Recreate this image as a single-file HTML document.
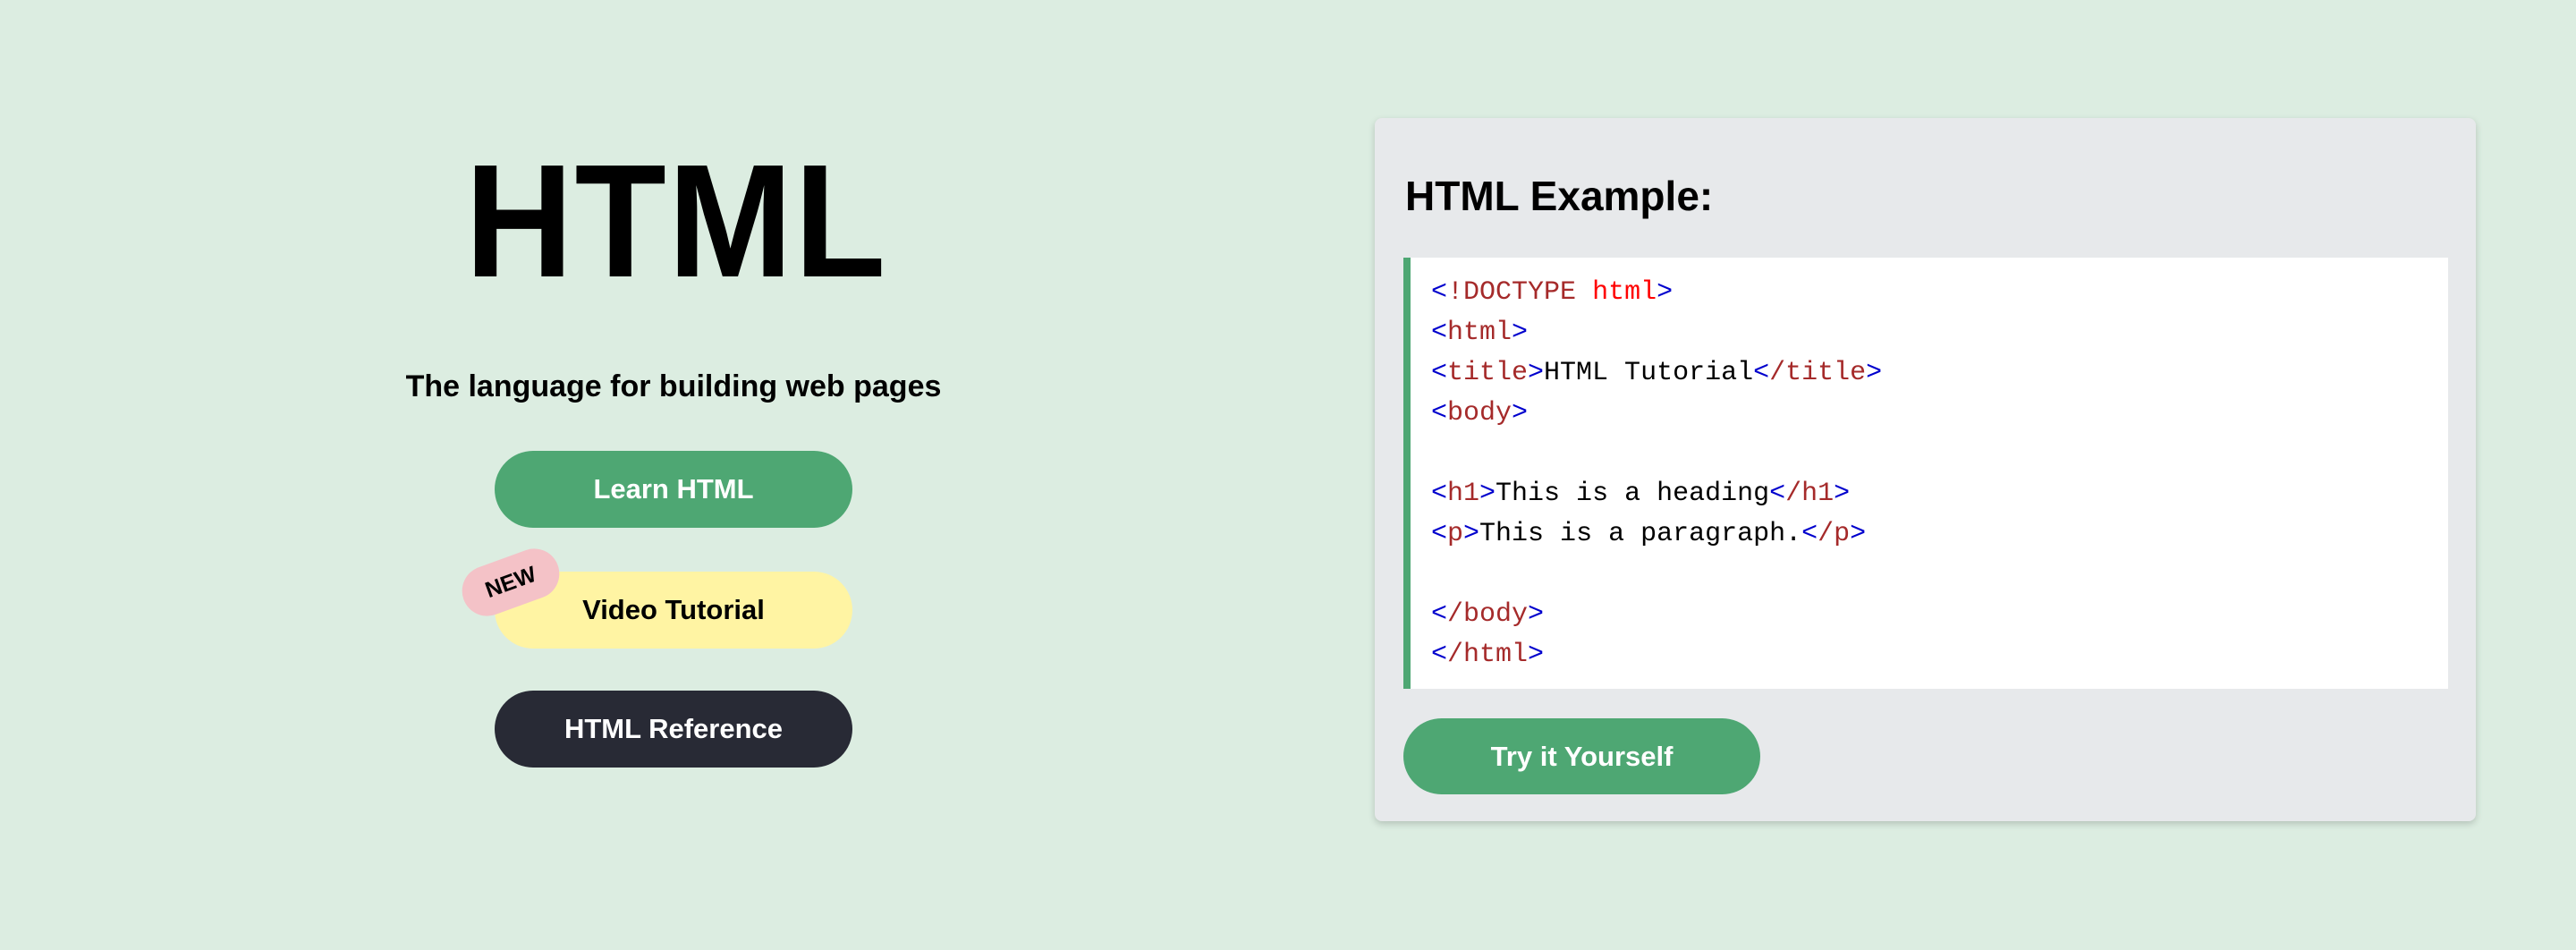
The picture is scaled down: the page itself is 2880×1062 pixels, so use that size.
<!DOCTYPE html>
<html><head><style>
html,body{margin:0;padding:0}
body{width:2880px;height:1062px;background:#dcede1;font-family:"Liberation Sans",sans-serif;position:relative;overflow:hidden}
.abs{position:absolute}
h1{position:absolute;left:456px;width:600px;top:138px;margin:0;font-size:180px;line-height:220px;text-align:center;font-weight:bold;letter-spacing:2px;color:#000;transform:scaleX(0.93);transform-origin:center}
.sub{left:353px;width:800px;top:410px;text-align:center;font-size:34px;font-weight:bold;color:#000;line-height:45px}
.btn{position:absolute;border-radius:43px;text-align:center;font-weight:bold;font-size:31px;line-height:86px;height:86px}
.new{left:515px;top:623px;width:112px;height:56px;border-radius:28px;background:#f4c2c7;transform:rotate(-20deg);font-weight:bold;font-size:25px;line-height:56px;text-align:center;color:#000}
.panel{left:1537px;top:132px;width:1231px;height:786px;background:#e7e9eb;border-radius:8px;box-shadow:0 3px 8px rgba(0,0,0,0.18)}
.ph{left:1571px;top:192px;font-size:46px;font-weight:bold;color:#000}
.code{left:1569px;top:288px;width:1160px;height:482px;background:#fff;border-left:8px solid #4ea773}
pre{margin:0;position:absolute;left:23px;top:17px;font-family:"Liberation Mono",monospace;font-size:30px;line-height:45px;color:#000}
.b{color:#0000cd}.t{color:#a52a2a}.r{color:#ff0000}
</style></head><body>
<h1>HTML</h1>
<div class="abs sub">The language for building web pages</div>
<div class="btn" style="left:553px;top:504px;width:400px;background:#4ea773;color:#fff">Learn HTML</div>
<div class="btn" style="left:553px;top:639px;width:400px;background:#fff4a3;color:#000">Video Tutorial</div>
<div class="abs new">NEW</div>
<div class="btn" style="left:553px;top:772px;width:400px;background:#282a35;color:#fff">HTML Reference</div>
<div class="abs panel"></div>
<div class="abs ph">HTML Example:</div>
<div class="abs code"><pre><span class="b">&lt;</span><span class="t">!DOCTYPE</span> <span class="r">html</span><span class="b">&gt;</span>
<span class="b">&lt;</span><span class="t">html</span><span class="b">&gt;</span>
<span class="b">&lt;</span><span class="t">title</span><span class="b">&gt;</span>HTML Tutorial<span class="b">&lt;</span><span class="t">/title</span><span class="b">&gt;</span>
<span class="b">&lt;</span><span class="t">body</span><span class="b">&gt;</span>

<span class="b">&lt;</span><span class="t">h1</span><span class="b">&gt;</span>This is a heading<span class="b">&lt;</span><span class="t">/h1</span><span class="b">&gt;</span>
<span class="b">&lt;</span><span class="t">p</span><span class="b">&gt;</span>This is a paragraph.<span class="b">&lt;</span><span class="t">/p</span><span class="b">&gt;</span>

<span class="b">&lt;</span><span class="t">/body</span><span class="b">&gt;</span>
<span class="b">&lt;</span><span class="t">/html</span><span class="b">&gt;</span></pre></div>
<div class="btn" style="left:1569px;top:803px;width:399px;height:85px;line-height:85px;background:#4ea773;color:#fff">Try it Yourself</div>
</body></html>
